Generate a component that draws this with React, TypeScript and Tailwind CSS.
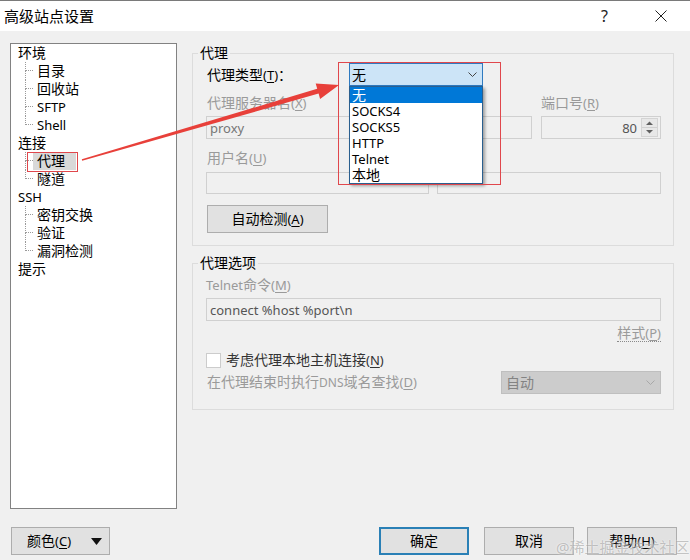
import React from "react";

const FONT = "font-['Noto_Sans','Noto_Sans_CJK_SC',sans-serif]";

type Node = { t: string; children: string[] };
const tree: Node[] = [
  { t: "环境", children: ["目录", "回收站", "SFTP", "Shell"] },
  { t: "连接", children: ["代理", "隧道"] },
  { t: "SSH", children: ["密钥交换", "验证", "漏洞检测"] },
  { t: "提示", children: [] },
];

const isLatin = (s: string) => /^[A-Za-z0-9]+$/.test(s);

function Tree() {
  return (
    <div className="h-[466px] w-[167px] shrink-0 border border-[#828282] bg-white">
      {tree.map((n) => (
        <div key={n.t}>
          <div className="flex h-[18px] items-center pl-[7px]">
            <span className={isLatin(n.t) ? "text-[13px]" : "text-[14px]"}>{n.t}</span>
          </div>
          {n.children.map((c, i) => {
            const last = i === n.children.length - 1;
            const sel = c === "代理";
            return (
              <div key={c} className="flex h-[18px]">
                <div className="w-[14px] shrink-0" />
                <div className="flex w-[8px] shrink-0 flex-col">
                  <div className="h-[9px] border-b border-l border-dotted border-[#9a9a9a]" />
                  <div className={last ? "flex-1" : "flex-1 border-l border-dotted border-[#9a9a9a]"} />
                </div>
                <div
                  className={
                    sel
                      ? "flex h-[18px] items-center bg-[#d9d9d9] pl-[4px] pr-[11px]"
                      : "flex h-[18px] items-center pl-[4px]"
                  }
                >
                  <span className={isLatin(c) ? "text-[13px]" : "text-[14px]"}>{c}</span>
                </div>
              </div>
            );
          })}
        </div>
      ))}
    </div>
  );
}

function Key({ k }: { k: string }) {
  return (
    <>
      (<span className="underline underline-offset-2">{k}</span>)
    </>
  );
}

function Group({ title, children }: { title: string; children: React.ReactNode }) {
  return (
    <fieldset className="m-0 w-[482px] border border-[#dcdcdc] p-0">
      <legend className="ml-[5px] px-[2px] text-[14px] leading-[18px] text-black">{title}</legend>
      {children}
    </fieldset>
  );
}

export default function App() {
  return (
    <div
      className={`relative h-[560px] w-[690px] overflow-hidden bg-[#f0f0f0] text-[14px] leading-[18px] text-black ${FONT}`}
    >
      {/* Title bar */}
      <div className="flex h-[31px] items-center border-t border-[#7a7a7a] bg-white">
        <span className="ml-[4px] text-[15px] text-black">高级站点设置</span>
        <span className="ml-auto mr-[47px] text-[16px] text-[#222]">?</span>
        <svg className="mr-[23px]" width="12" height="12" viewBox="0 0 12 12">
          <path d="M0.5 0.5L11.5 11.5M11.5 0.5L0.5 11.5" stroke="#222" strokeWidth="1" fill="none" />
        </svg>
      </div>

      {/* Body */}
      <div className="mt-[12px] flex items-start pl-[10px]">
        <Tree />
        <div className="ml-[15px] mt-[1px] flex w-[482px] flex-col">
          <Group title="代理">
            <div className="pb-[12px] pl-[13px] pr-[12px]">
              <div className="mt-[1px] flex h-[23px] items-center">
                <div className="w-[143px] pl-[1px] text-black">
                  代理类型<span className="text-[13px]">(<span className="underline underline-offset-2">T</span>)</span>：
                </div>
                <div className="flex h-[23px] w-[134px] items-center border border-[#2f7ac0] bg-[#cce4f7] pl-[2px]">
                  <span>无</span>
                  <svg className="ml-auto mr-[5px]" width="9" height="5" viewBox="0 0 9 5">
                    <path d="M0.5 0.5L4.5 4.5L8.5 0.5" stroke="#444" fill="none" />
                  </svg>
                </div>
              </div>

              <div className="mt-[8px] grid h-[18px] grid-cols-[326px_120px] gap-x-[9px] text-[#9a9a9a]">
                <div className="pl-[1px]">
                  代理服务器名<span className="text-[13px]"><Key k="X" /></span>
                </div>
                <div>
                  端口号<span className="text-[13px]"><Key k="R" /></span>
                </div>
              </div>
              <div className="mt-[4px] grid grid-cols-[326px_120px] gap-x-[9px]">
                <div className="flex h-[23px] items-center border border-[#d0d0d0] bg-[#f0f0f0] pl-[3px] text-[13px] text-[#777]">
                  proxy
                </div>
                <div className="flex h-[23px] items-center justify-end border border-[#d0d0d0] bg-[#f0f0f0] text-[13px] text-[#555]">
                  <span className="mr-[4px]">80</span>
                  <svg className="mr-[2px]" width="17" height="19" viewBox="0 0 17 19">
                    <rect x="0.5" y="0.5" width="16" height="18" fill="#e8e8e8" stroke="#d4d4d4" />
                    <line x1="1" y1="9.5" x2="16" y2="9.5" stroke="#d0d0d0" />
                    <path d="M5 7L8.5 3.5L12 7Z" fill="#606060" />
                    <path d="M5 12L8.5 15.5L12 12Z" fill="#606060" />
                  </svg>
                </div>
              </div>

              <div className="mt-[10px] grid h-[18px] grid-cols-[223px_224px] gap-x-[8px] text-[#9a9a9a]">
                <div className="pl-[1px]">
                  用户名<span className="text-[13px]"><Key k="U" /></span>
                </div>
                <div />
              </div>
              <div className="mt-[5px] grid grid-cols-[223px_224px] gap-x-[8px]">
                <div className="h-[22px] border border-[#d0d0d0] bg-[#f0f0f0]" />
                <div className="h-[22px] border border-[#d0d0d0] bg-[#f0f0f0]" />
              </div>

              <div className="mt-[11px] flex h-[28px] w-[121px] ml-[1px] items-center justify-center border border-[#adadad] bg-[#e1e1e1] text-black">
                自动检测<span className="text-[13px]"><Key k="A" /></span>
              </div>
            </div>
          </Group>

          <div className="mt-[8px]">
            <Group title="代理选项">
              <div className="pb-[15px] pl-[13px] pr-[12px]">
                <div className="mt-[4px] h-[18px] text-[13px] text-[#9a9a9a]">
                  Telnet<span className="text-[14px]">命令</span>
                  <Key k="M" />
                </div>
                <div className="mt-[4px] flex h-[23px] items-center border border-[#d0d0d0] bg-[#f0f0f0] pl-[3px] text-[13px] text-[#555]">
                  connect %host %port\n
                </div>
                <div className="mt-[4px] flex h-[18px] items-start justify-end">
                  <span className="border-b border-dotted border-[#8a8a8a] leading-[16px] text-[#9a9a9a]">
                    样式<span className="text-[13px]"><Key k="P" /></span>
                  </span>
                </div>
                <div className="mt-[8px] flex h-[18px] items-center">
                  <div className="h-[15px] w-[15px] border border-[#cccccc] bg-white" />
                  <span className="ml-[5px] text-[#333]">
                    考虑代理本地主机连接<span className="text-[13px]"><Key k="N" /></span>
                  </span>
                </div>
                <div className="mt-[2px] flex h-[23px] items-center justify-between">
                  <span className="pl-[1px] text-[#9a9a9a]">
                    在代理结束时执行<span className="text-[12px]">DNS</span>域名查找
                    <span className="text-[13px]"><Key k="D" /></span>
                  </span>
                  <div className="flex h-[23px] w-[160px] items-center border border-[#bfbfbf] bg-[#cccccc] pl-[4px] text-[#838383]">
                    <span>自动</span>
                    <svg className="ml-auto mr-[5px]" width="9" height="5" viewBox="0 0 9 5">
                      <path d="M0.5 0.5L4.5 4.5L8.5 0.5" stroke="#a8a8a8" fill="none" />
                    </svg>
                  </div>
                </div>
              </div>
            </Group>
          </div>
        </div>
      </div>

      {/* Bottom buttons */}
      <div className="mt-[18px] flex pl-[11px]">
        <div className="flex h-[28px] w-[99px] items-center border border-[#adadad] bg-[#e1e1e1] pl-[15px]">
          <span>
            颜色<span className="text-[13px]"><Key k="C" /></span>
          </span>
          <svg className="ml-auto mr-[7px]" width="11" height="7" viewBox="0 0 11 7">
            <path d="M0 0H11L5.5 7Z" fill="#111" />
          </svg>
        </div>
        <div className="ml-[269px] flex h-[28px] w-[90px] items-center justify-center border-2 border-[#2a80b6] bg-[#e1e1e1]">
          确定
        </div>
        <div className="ml-[15px] flex h-[28px] w-[90px] items-center justify-center border border-[#adadad] bg-[#e1e1e1]">
          取消
        </div>
        <div className="ml-[13px] flex h-[28px] w-[90px] items-center justify-center border border-[#adadad] bg-[#e1e1e1]">
          帮助<span className="text-[13px]"><Key k="H" /></span>
        </div>
      </div>

      {/* Open dropdown list */}
      <div className="absolute left-[349px] top-[86px] flex h-[98px] w-[134px] flex-col border border-[#2a5f8f] bg-white shadow-[2px_2px_3px_rgba(0,0,0,0.35)]">
        <div className="h-[16px] bg-[#0078d7] pl-[2px] text-[14px] leading-[16px] text-white">无</div>
        <div className="h-[16px] pl-[2px] text-[13px] leading-[16px]">SOCKS4</div>
        <div className="h-[16px] pl-[2px] text-[13px] leading-[16px]">SOCKS5</div>
        <div className="h-[16px] pl-[2px] text-[13px] leading-[16px]">HTTP</div>
        <div className="h-[16px] pl-[2px] text-[13px] leading-[16px]">Telnet</div>
        <div className="h-[16px] pl-[2px] text-[14px] leading-[16px]">本地</div>
      </div>

      {/* Annotation: red boxes */}
      <div className="absolute left-[338px] top-[62px] h-[123px] w-[163px] border border-[#e0474c]" />
      <div className="absolute left-[27px] top-[152px] h-[20px] w-[51px] border border-[#e0474c]" />

      {/* Annotation: red arrow */}
      <svg className="pointer-events-none absolute left-0 top-0" width="690" height="560" viewBox="0 0 690 560">
        <polygon
          points="82.2,160.8 318.6,93.6 320.1,98.9 339,85 315.7,83.5 317.2,88.8 81.8,159.2"
          fill="#e8403a"
        />
      </svg>

      {/* Watermark */}
      <div className="absolute left-[556px] top-[538px] text-[15px] leading-[18px] text-[rgba(130,130,130,0.45)] [text-shadow:0_0_2px_rgba(255,255,255,0.9)]">
        @稀土掘金技术社区
      </div>
    </div>
  );
}
